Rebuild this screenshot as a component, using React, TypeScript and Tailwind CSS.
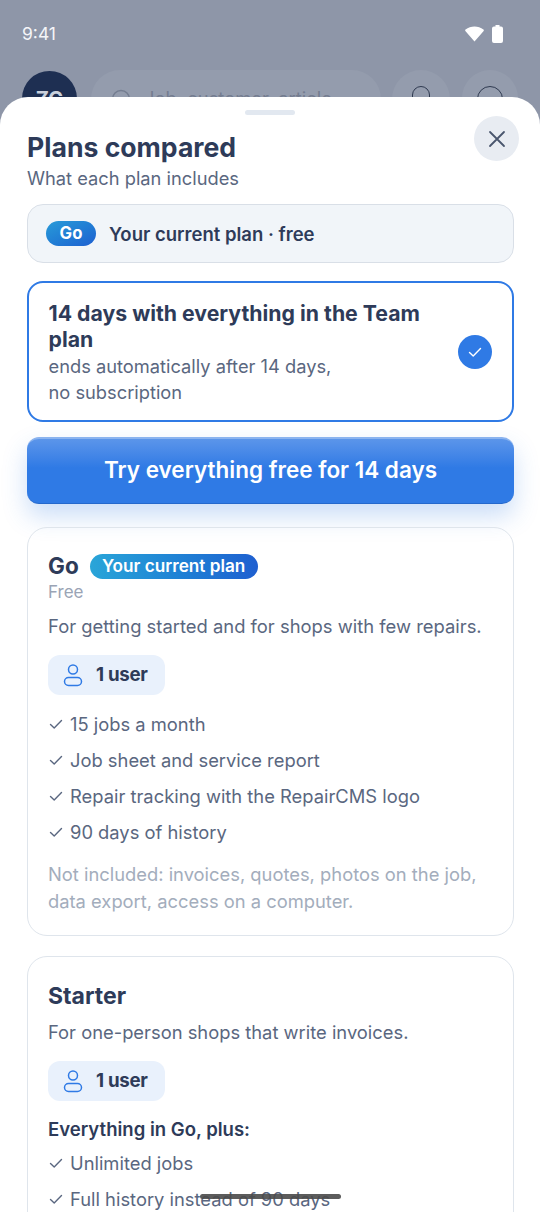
import React from "react";

const Check = ({ className = "" }: { className?: string }) => (
  <svg viewBox="0 0 16 16" className={className} fill="none" stroke="currentColor" strokeWidth="1.4" strokeLinecap="round" strokeLinejoin="round">
    <path d="M2.5 8.5 L6.2 12 L13.5 4.5" />
  </svg>
);

const UserBadge = () => (
  <div className="flex h-[40px] w-[117px] items-center rounded-[12px] bg-[#e9f1fc] pl-[15px]">
    <svg viewBox="0 0 20 24" className="h-[24px] w-[20px] text-[#2f7ae5]" fill="none" stroke="currentColor" strokeWidth="1.5">
      <circle cx="10" cy="6.5" r="4.5" />
      <rect x="1.5" y="14.5" width="17" height="8" rx="4" />
    </svg>
    <span className="ml-[13px] text-[18.7px] font-bold tracking-[-0.3px] text-[#2e3b59]">1 user</span>
  </div>
);

const Item = ({ children }: { children: React.ReactNode }) => (
  <div className="flex h-[36px] items-center text-[#5a6780]">
    <Check className="mr-[6px] h-[16px] w-[16px] text-[#5a6780]" />
    <span className="text-[18.35px] leading-[26px]">{children}</span>
  </div>
);

export default function App() {
  return (
    <div className="relative h-[1212px] w-[540px] overflow-hidden bg-[#8e96a8] font-['Inter',sans-serif]">
      <div className="flex h-[70px] items-start justify-between px-[22px] pt-[23px]">
        <span className="text-[17.5px] leading-[22px] text-[#f4f5f8]">9:41</span>
        <div className="flex items-center gap-[8px] pr-[15px] pt-[2px]">
          <svg viewBox="0 0 20 16" className="h-[16px] w-[19px]" fill="#ffffff"><path d="M0.6 5 C0 4.4 0 3.8 0.6 3.3 C6 -1 14 -1 19.4 3.3 C20 3.8 20 4.4 19.4 5 L10 16 Z" /></svg>
          <svg viewBox="0 0 11 18" className="h-[18px] w-[11px]" fill="#ffffff"><path d="M3.5 0 h4 v1.5 h1.5 a2 2 0 0 1 2 2 V16 a2 2 0 0 1-2 2 H2 a2 2 0 0 1-2-2 V3.5 a2 2 0 0 1 2-2 h1.5 Z" /></svg>
        </div>
      </div>
      <div className="flex items-start pl-[22px]">
        <div className="mt-[1px] flex h-[55px] w-[55px] items-center justify-center rounded-full bg-[#1e2f52] text-[20px] font-bold text-[#c9d0dc]">ZG</div>
        <div className="ml-[14px] flex h-[58px] w-[290px] items-center rounded-full bg-[#949cad] pl-[20px]">
          <svg viewBox="0 0 20 20" className="h-[20px] w-[20px]" fill="none" stroke="#747d90" strokeWidth="1.5"><circle cx="10" cy="10" r="8.5" /></svg>
          <span className="ml-[13px] text-[18.4px] text-[#747d90]">Job, customer, article</span>
        </div>
        <div className="ml-[11px] flex h-[58px] w-[58px] justify-center rounded-full bg-[#949cad] pt-[16px]">
          <div className="h-[30px] w-[18px] rounded-full border-[1.5px] border-[#2f3a50]" />
        </div>
        <div className="ml-[12px] flex h-[58px] w-[56px] justify-center rounded-full bg-[#949cad] pt-[16px]">
          <div className="h-[30px] w-[26px] rounded-full border-[1.5px] border-[#2f3a50]" />
        </div>
      </div>

      <div className="absolute inset-x-0 top-[97px] h-[1115px] overflow-hidden rounded-t-[28px] bg-white">
        <div className="mx-auto mt-[13px] h-[5px] w-[50px] rounded-full bg-[#e2e8f0]" />
        <button className="absolute right-[21px] top-[19px] flex h-[45px] w-[45px] items-center justify-center rounded-full bg-[#e8ecf2] text-[#4a566e]">
          <svg viewBox="0 0 18 18" className="h-[18px] w-[18px]" fill="none" stroke="currentColor" strokeWidth="1.8" strokeLinecap="round"><path d="M2 2 L16 16 M16 2 L2 16" /></svg>
        </button>
        <div className="pl-[27px] pr-[26px]">
          <h1 className="mt-[15px] text-[26.6px] font-bold leading-[34px] text-[#2e3b59]">Plans compared</h1>
          <p className="mt-[2px] text-[18.3px] leading-[24px] text-[#5a6780]">What each plan includes</p>

          <div className="mt-[14px] flex h-[59px] items-center rounded-[16px] border border-[#d9dfe7] bg-[#f1f5f9] pl-[18px]">
            <span className="flex h-[25px] w-[50px] items-center justify-center rounded-full bg-gradient-to-br from-[#2a9bd8] to-[#1f5fd0] text-[16.7px] font-bold text-white">Go</span>
            <span className="ml-[13px] pt-[2px] text-[18.5px] font-semibold text-[#2e3b59]">Your current plan · free</span>
          </div>

          <div className="mt-[18px] flex h-[141px] items-center rounded-[16px] border-[2.5px] border-[#2f7ae5] bg-white pl-[19.5px] pr-[20px]">
            <div className="flex-1 pt-[1px]">
              <div className="text-[21.25px] font-bold leading-[26px] text-[#2e3b59]">14 days with everything in the Team plan</div>
              <div className="mt-[1px] text-[18.3px] leading-[26px] text-[#5a6780]">ends automatically after 14 days,<br />no subscription</div>
            </div>
            <div className="ml-[24px] flex h-[34px] w-[34px] shrink-0 items-center justify-center rounded-full bg-[#2f7ae5] text-white">
              <Check className="h-[16px] w-[16px]" />
            </div>
          </div>

          <button className="mt-[15px] flex h-[67px] w-full items-center justify-center rounded-[12px] border-t-2 border-b border-t-[#8ab3ef] border-b-[#2468cc] bg-gradient-to-b from-[#5b95ea] via-[#2f7ae5] via-45% to-[#2f7ae5] pb-[2px] text-[22.5px] font-semibold text-white shadow-[0_12px_24px_rgba(47,122,229,0.25)]">
            Try everything free for 14 days
          </button>

          <div className="mt-[23px] h-[409px] rounded-[20px] border-[1.5px] border-[#dfe5ec] px-[20px] pt-[23px]">
            <div className="flex items-center">
              <span className="text-[22.5px] font-bold leading-[30px] text-[#2e3b59]">Go</span>
              <span className="ml-[11px] flex h-[25px] w-[168px] items-center justify-center rounded-full bg-gradient-to-r from-[#2aa5d8] to-[#1f5fd0] text-[17.2px] font-semibold text-white">Your current plan</span>
            </div>
            <div className="text-[17px] leading-[22px] text-[#9aa4b5]">Free</div>
            <p className="mt-[10px] text-[18.4px] leading-[26px] text-[#5a6780]">For getting started and for shops with few repairs.</p>
            <div className="mt-[16px]"><UserBadge /></div>
            <div className="mt-[11px]">
              <Item>15 jobs a month</Item>
              <Item>Job sheet and service report</Item>
              <Item>Repair tracking with the RepairCMS logo</Item>
              <Item>90 days of history</Item>
            </div>
            <p className="mt-[11px] text-[18.35px] leading-[27px] text-[#a3adbc]">Not included: invoices, quotes, photos on the job, data export, access on a computer.</p>
          </div>

          <div className="mt-[20px] h-[400px] rounded-[20px] border-[1.5px] border-[#dfe5ec] px-[20px] pt-[24px]">
            <div className="text-[23px] font-bold leading-[30px] text-[#2e3b59]">Starter</div>
            <p className="mt-[8px] text-[18.35px] leading-[26px] text-[#5a6780]">For one-person shops that write invoices.</p>
            <div className="mt-[16px]"><UserBadge /></div>
            <div className="mt-[15px] text-[18.55px] font-semibold leading-[26px] text-[#2e3b59]">Everything in Go, plus:</div>
            <div className="mt-[3px]">
              <Item>Unlimited jobs</Item>
              <Item>Full history instead of 90 days</Item>
            </div>
          </div>
        </div>
      </div>

      <div className="absolute left-[200px] top-[1194px] h-[5px] w-[141px] rounded-full bg-[#4a4a4a]/90" />
    </div>
  );
}
